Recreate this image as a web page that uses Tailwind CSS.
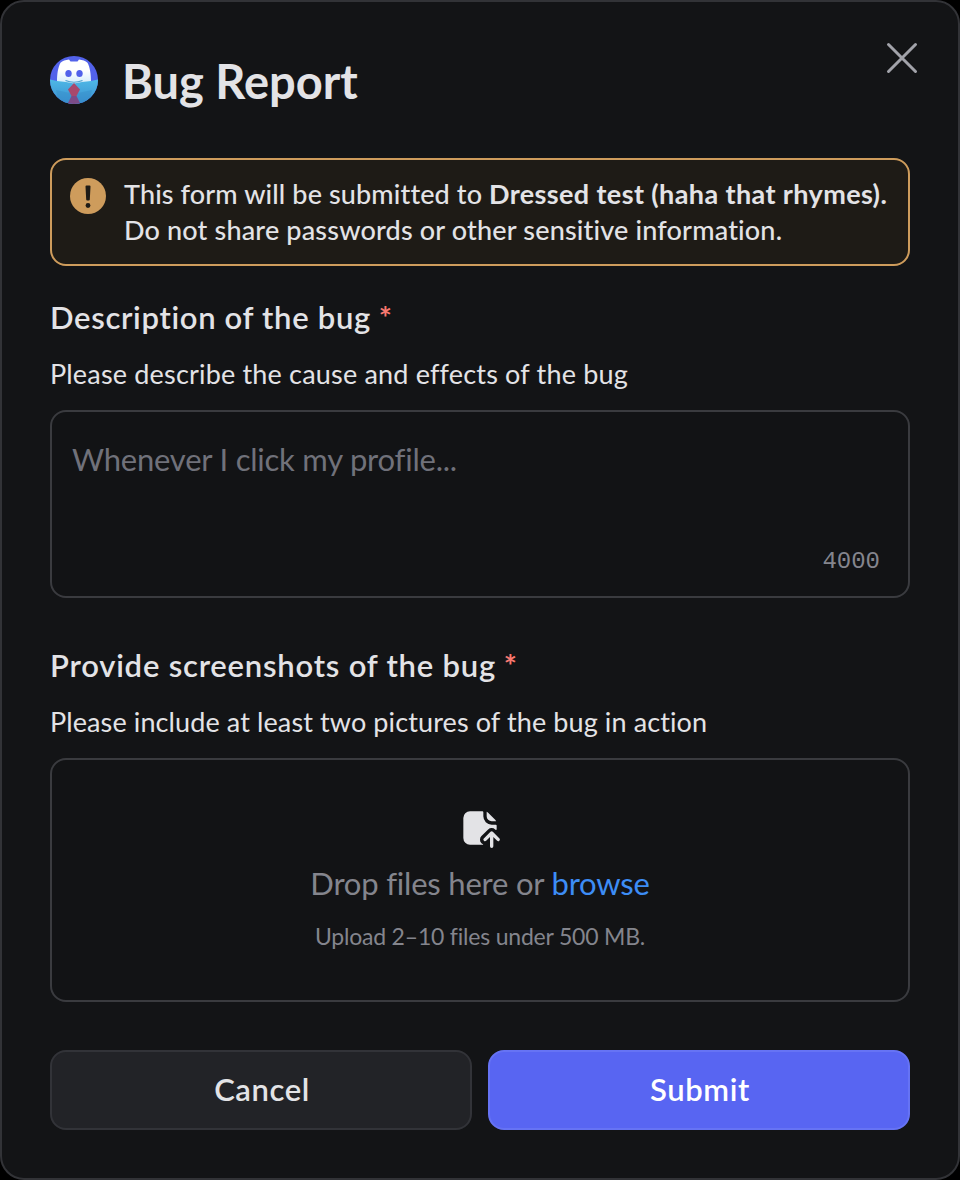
<!DOCTYPE html>
<html lang="en">
<head>
<meta charset="utf-8">
<title>Bug Report</title>
<script src="https://cdn.jsdelivr.net/npm/@tailwindcss/browser@4"></script>
</head>
<body class="bg-black font-[Lato,sans-serif] text-[#e3e3e6]">
<main class="flex h-[1180px] w-[960px] flex-col rounded-[24px] border-2 border-[#323337] bg-[#131416] px-12 whitespace-nowrap [font-variant-ligatures:none]">
  <header class="flex h-[156px] shrink-0 items-start justify-between">
    <div class="flex items-start gap-6 pt-[45px]">
      <svg class="mt-[9px] size-12" viewBox="0 0 48 48">
        <defs>
          <clipPath id="disc"><circle cx="24" cy="24" r="24"/></clipPath>
          <linearGradient id="face" x1="0" y1="0" x2="0" y2="1"><stop offset=".4" stop-color="#fff"/><stop offset="1" stop-color="#c9e8fa"/></linearGradient>
          <linearGradient id="suit" x1="0" y1="0" x2="0" y2="1"><stop offset="0" stop-color="#4eb8e6"/><stop offset="1" stop-color="#3a8fd0"/></linearGradient>
        </defs>
        <g clip-path="url(#disc)">
          <path fill="#5262ea" d="M0 0h48v48H0z"/>
          <path fill="url(#face)" d="M19 3.500c-3.500.3-6.500 1.600-8.500 3.200C8 11 7 18 7 26c3 3 8 5 17 5s14-2 17-5c0-8-1-15-3.500-19.300-2-1.600-5-2.900-8.500-3.200l-1.500 2h-7z"/>
          <ellipse cx="18.500" cy="17.500" rx="3.200" ry="3.600" fill="#5262ea"/><ellipse cx="29.500" cy="17.500" rx="3.200" ry="3.600" fill="#5262ea"/>
          <path d="M15.500 24.500q8.500 3.500 17 0" fill="none" stroke="#4f9fcc" stroke-width="1.200"/>
          <path fill="url(#suit)" d="M0 23.500l7 1.500 9 1 8 1.500 8-1.500 9-1 7-1.500V48H0z"/>
          <path fill="#358ac6" d="M6 34l14 3 3-3-3 14H9zM42 34l-14 3-3-3 3 14h11z" opacity=".4"/>
          <path fill="#a8486c" d="M24 27l6 6.500-3.500 6.500h-5L18 33.500z"/>
          <path fill="#7c4b87" d="M21.500 40h5l4 8h-13z"/>
        </g>
      </svg>
      <h1 class="text-[47px] leading-[68px] font-bold">Bug Report</h1>
    </div>
    <svg class="-mr-2 mt-10 size-8" viewBox="0 0 32 32" fill="none" stroke="#a2a3aa" stroke-width="3" stroke-linecap="round"><path d="M2.500 2.500l27 27M29.500 2.500l-27 27"/></svg>
  </header>

  <section class="flex h-[108px] shrink-0 gap-[18px] rounded-2xl border-2 border-[#ce9c5c] bg-[#1e1b16] px-[18px] pt-[18px] text-[27px] leading-9 font-medium">
    <svg class="size-9 shrink-0" viewBox="0 0 36 36"><circle cx="18" cy="18" r="18" fill="#ce9c5c"/><path fill="#1e1b16" d="M15.500 8.500q0-1 1-1h3q1 0 1 1l-.7 13q0 1-1 1h-1.600q-1 0-1-1z"/><circle cx="18" cy="27.500" r="2.400" fill="#1e1b16"/></svg>
    <p class="-mt-0.5"><span class="tracking-[0.12px]">This form will be submitted to</span> <b class="tracking-[0.39px]">Dressed test (haha that rhymes).</b><br><span class="tracking-[0.17px]">Do not share passwords or other sensitive information.</span></p>
  </section>

  <section class="mt-8 flex h-[300px] shrink-0 flex-col">
    <h2 class="-mt-px text-[31px] leading-10 font-semibold"><span class="tracking-[0.68px]">Description of the bug</span> <span class="font-bold text-[#f87970]">*</span></h2>
    <p class="mt-[17px] text-[27px] leading-10 tracking-[0.18px]">Please describe the cause and effects of the bug</p>
    <div class="mt-4 flex h-[188px] flex-col justify-between rounded-2xl border-2 border-[#3a3b3f] bg-[#121315] px-5 pt-[27px]">
      <p class="text-[31px] leading-10 tracking-[-0.22px] text-[#70717a]">Whenever I click my profile...</p>
      <p class="mb-4 pr-2 text-right font-['Liberation_Mono',monospace] text-2xl leading-9 text-[#84858d]">4000</p>
    </div>
  </section>

  <section class="mt-12 flex h-[356px] shrink-0 flex-col">
    <h2 class="-mt-px text-[31px] leading-10 font-semibold"><span class="tracking-[0.79px]">Provide screenshots of the bug</span> <span class="font-bold text-[#f87970]">*</span></h2>
    <p class="mt-[17px] text-[27px] leading-10 tracking-[0.11px]">Please include at least two pictures of the bug in action</p>
    <div class="mt-4 flex h-[244px] flex-col items-center rounded-2xl border-2 border-[#3a3b3f] bg-[#121315] pt-[48px]">
      <svg class="size-10" viewBox="0 0 24 24" fill="#e3e3e6"><path d="M13.820 21.700c.17.05.14.3-.04.3H6a4 4 0 0 1-4-4V6a4 4 0 0 1 4-4h7.500c.28 0 .5.22.5.5V5a5 5 0 0 0 5 5h2.500c.28 0 .5.22.5.5v2.300a.4.4 0 0 1-.68.27l-.2-.2a3 3 0 0 0-4.240 0l-4 4a3 3 0 0 0 0 4.250c.3.3.6.46.94.58Z"/><path d="M21.660 8c.03 0 .05-.03.04-.06a3 3 0 0 0-.58-.82l-4.240-4.240a3 3 0 0 0-.82-.58.04.04 0 0 0-.06.04V5a3 3 0 0 0 3 3h2.660ZM18.300 14.300a1 1 0 0 1 1.400 0l4 4a1 1 0 0 1-1.400 1.400L20 17.420V23a1 1 0 1 1-2 0v-5.590l-2.300 2.300a1 1 0 0 1-1.400-1.420l4-4Z"/></svg>
      <p class="mt-[15px] text-[31px] leading-10 tracking-[-0.2px] text-[#84858d]">Drop files here or <span class="text-[#3d8df5]">browse</span></p>
      <p class="mt-[13px] text-[23px] leading-10 tracking-[-0.2px] text-[#84858d]">Upload 2–10 files under 500 MB.</p>
    </div>
  </section>

  <footer class="mt-12 grid grid-cols-2 gap-4 text-[31px] font-semibold tracking-[0.6px]">
    <button class="h-20 rounded-2xl border-2 border-[#323338] bg-[#222327] pb-0.5 pl-0.5">Cancel</button>
    <button class="h-20 rounded-2xl border-2 border-[#6673f4] bg-[#5865f2] pb-0.5 pl-0.5 text-white">Submit</button>
  </footer>
</main>
</body>
</html>
